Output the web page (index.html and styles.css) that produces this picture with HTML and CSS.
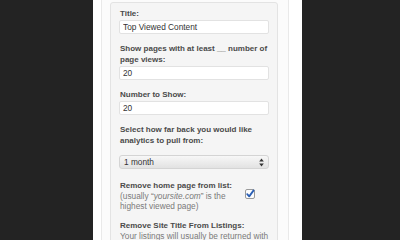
FILE: index.html
```html
<!DOCTYPE html>
<html lang="en">
<head>
  <meta charset="UTF-8">
  <title>Top Viewed Content widget</title>
  <link rel="stylesheet" href="styles.css">
</head>
<body>

  <div class="page">
    <div class="sidebar">
      <form class="widget">
        <div class="field">
          <label for="title">Title:</label>
          <input type="text" id="title" value="Top Viewed Content">
        </div>

        <div class="field">
          <label for="minviews">Show pages with at least __ number of page views:</label>
          <input type="text" id="minviews" value="20">
        </div>

        <div class="field">
          <label for="count">Number to Show:</label>
          <input type="text" id="count" value="20">
        </div>

        <div class="field">
          <label for="range">Select how far back you would like analytics to pull from:</label>
          <div class="select">
            <span>1 month</span>
            <svg width="5" height="9" viewBox="0 0 5 9">
              <path d="M2.5 0.5 L4.8 3.6 L0.2 3.6 Z" fill="#333"/>
              <path d="M2.5 8.5 L4.8 5.4 L0.2 5.4 Z" fill="#333"/>
            </svg>
          </div>
        </div>

        <div class="field check-row">
          <div class="check-text">
            <label>Remove home page from list:</label>
            <p class="hint">(usually “<em>yoursite.com</em>” is the highest viewed page)</p>
          </div>
          <svg class="checkbox" width="10" height="10" viewBox="0 0 10 10">
            <rect x="0.5" y="0.5" width="9" height="9" rx="1.5" fill="#fdfdfd" stroke="#9a9a9a"/>
            <path d="M2.2 5.2 L4.2 7.4 L8.6 1.4" fill="none" stroke="#2b5fb4" stroke-width="1.8" stroke-linecap="round" stroke-linejoin="round"/>
          </svg>
        </div>

        <div class="field">
          <label>Remove Site Title From Listings:</label>
          <p class="hint">Your listings will usually be returned with the site title appended.</p>
        </div>
      </form>
    </div>
  </div>

</body>
</html>
```
FILE: styles.css
```css
body { margin: 0; background-color: #232323; font-family: "Liberation Sans", Arial, sans-serif; }
.page {
  width: 209px; height: 240px; margin-left: 93px;
  background-color: #fff; padding: 0 13px 0 8px; box-sizing: border-box; overflow: hidden;
}
.sidebar {
  height: 100%; background-color: #fbfbfb;
  border-left: 1px solid #e9e9e9; border-right: 1px solid #e9e9e9;
  padding: 2px 10px 0 8px; box-sizing: border-box;
}
.widget {
  background-color: #f5f5f5; border: 1px solid #e3e3e3; border-radius: 3px;
  padding: 5px 8px 0 8px; height: 300px;
}
.field { margin-bottom: 9px; }
label {
  display: block; font-size: 8px; font-weight: bold; line-height: 11px;
  color: #4a4a4a; padding-left: 1px;
}
input[type="text"] {
  display: block; width: 150px; height: 14px; box-sizing: border-box; margin: 1px 0 0 0;
  border: 1px solid #e2e2e2; border-radius: 2px; background: #fff;
  font-family: inherit; font-size: 8.3px; color: #333; padding: 0 3px;
}
.select {
  display: flex; align-items: center; justify-content: space-between;
  width: 150px; height: 14px; box-sizing: border-box; margin-top: 9px;
  border: 1px solid #d4d4d4; border-radius: 3px;
  background: linear-gradient(#f7f7f7, #e2e2e2);
  font-size: 8.3px; color: #333; padding: 0 4px 0 4px;
}
.check-row { display: flex; align-items: flex-start; justify-content: space-between; margin-top: 11px; }
.check-text { width: 125px; }
.checkbox { margin: 9px 14px 0 0; }
.hint { margin: 0; font-size: 8.3px; line-height: 10px; color: #7a7a7a; padding-left: 1px; }
.hint em { font-style: italic; }
```
